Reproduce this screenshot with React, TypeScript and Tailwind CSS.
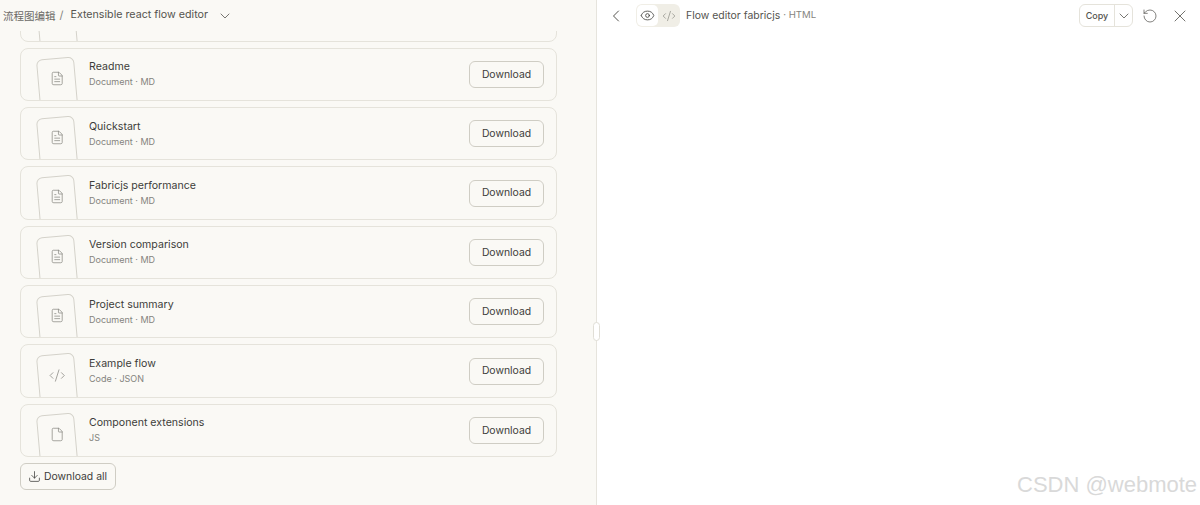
import React from 'react'
import { ChevronDown, ChevronLeft, CodeXml, Download, Eye, File, FileText, RotateCcw, X } from 'lucide-react'

const files = [
  { name: 'Readme', meta: 'Document · MD', icon: 'doc' },
  { name: 'Quickstart', meta: 'Document · MD', icon: 'doc' },
  { name: 'Fabricjs performance', meta: 'Document · MD', icon: 'doc' },
  { name: 'Version comparison', meta: 'Document · MD', icon: 'doc' },
  { name: 'Project summary', meta: 'Document · MD', icon: 'doc' },
  { name: 'Example flow', meta: 'Code · JSON', icon: 'code' },
  { name: 'Component extensions', meta: 'JS', icon: 'file' },
]

function Thumb({ icon }: { icon?: string }) {
  return (
    <div className="ml-[18px] mt-[9px] flex h-[72px] w-[38px] shrink-0 -rotate-[5deg] justify-center self-start rounded-[6px] border border-[#d4d2ca] bg-[#faf9f5] pt-[12px] text-[#8a8983]">
      <div className="h-[16px] rotate-[5deg]">
        {icon === 'doc' && <FileText size={15} strokeWidth={1.2} />}
        {icon === 'code' && <CodeXml size={17} strokeWidth={1.1} />}
        {icon === 'file' && <File size={15} strokeWidth={1.2} />}
      </div>
    </div>
  )
}

function FileCard({ name, meta, icon }: { name?: string; meta?: string; icon?: string }) {
  return (
    <div className="flex h-[53.33px] shrink-0 items-center overflow-hidden rounded-[8px] border border-[#e5e3db] bg-[#faf9f5]">
      <Thumb icon={icon} />
      {name && (
        <>
          <div className="ml-[12px] flex-1 pb-[1px]">
            <div className="text-[10.6px] leading-[16px] text-[#3d3d3a]">{name}</div>
            <div className="text-[9px] leading-[13px] text-[#85847e]">{meta}</div>
          </div>
          <button className="mr-[12px] h-[27px] w-[75px] rounded-[6px] border border-[#cfcdc4] text-[10.4px] text-[#3d3d3a]">
            Download
          </button>
        </>
      )}
    </div>
  )
}

export default function App() {
  return (
    <div className="relative flex h-[505px] w-[1200px] overflow-hidden bg-white font-['Inter',sans-serif]">
      <div className="flex h-full w-[597px] shrink-0 flex-col border-r border-[#e6e4dd] bg-[#faf9f5]">
        <div className="flex h-[31px] shrink-0 items-center pl-[3px] text-[11px] text-[#55544f]">
          <span className="font-['Noto_Sans_CJK_SC',sans-serif] text-[10.5px] text-[#6b6a65]">流程图编辑</span>
          <span className="ml-[4px] text-[#85847e]">/</span>
          <span className="ml-[7px] text-[10.7px] text-[#55544f]">Extensible react flow editor</span>
          <ChevronDown size={16} strokeWidth={1.2} className="ml-[9px] text-[#55544f]" />
        </div>
        <div className="flex min-h-0 flex-1 flex-col gap-[6px] overflow-hidden pl-[20px] pr-[39px]">
          <div className="-mt-[42.5px]">
            <FileCard />
          </div>
          {files.map((f) => (
            <FileCard key={f.name} name={f.name} meta={f.meta} icon={f.icon} />
          ))}
          <button className="flex h-[27px] w-[96px] shrink-0 items-center justify-center gap-[3px] rounded-[6px] border border-[#cfcdc4] pr-[1px] text-[10.4px] text-[#3d3d3a]">
            <Download size={13} strokeWidth={1.4} />
            Download all
          </button>
        </div>
      </div>

      <div className="flex h-[31px] flex-1 items-center pl-[9px] pr-[10px]">
        <ChevronLeft size={20} strokeWidth={1.2} className="text-[#55544f]" />
        <div className="ml-[10px] flex h-[23px] w-[44px] items-center rounded-[6px] bg-[#f0eee6] p-[1px]">
          <div className="flex h-[21px] w-[21px] items-center justify-center rounded-[5px] bg-white text-[#3d3d3a]">
            <Eye size={15} strokeWidth={1.3} />
          </div>
          <div className="flex h-[21px] flex-1 items-center justify-center text-[#8a8983]">
            <CodeXml size={14} strokeWidth={1.2} />
          </div>
        </div>
        <span className="ml-[6px] text-[10.45px] text-[#55544f]">Flow editor fabricjs</span>
        <span className="ml-[3px] text-[9.6px] text-[#85847e]">· HTML</span>
        <div className="ml-auto flex h-[23px] w-[54px] items-center rounded-[6px] border border-[#e5e3db]">
          <span className="w-[35px] border-r border-[#e5e3db] text-center text-[9px] font-medium leading-[21px] text-[#55544f]">
            Copy
          </span>
          <ChevronDown size={16} strokeWidth={1.2} className="ml-[1px] text-[#55544f]" />
        </div>
        <RotateCcw size={16} strokeWidth={1.1} className="ml-[9px] text-[#55544f]" />
        <X size={20} strokeWidth={1} className="ml-[12px] text-[#55544f]" />
      </div>

      <div className="absolute left-[593px] top-[322px] h-[19px] w-[7px] rounded-full border border-[#e0ded6] bg-white" />
      <div className="absolute left-[1017px] top-[471px] font-['Liberation_Sans',sans-serif] text-[22px] leading-[27px] text-[#d9d9d9]">
        CSDN @webmote
      </div>
    </div>
  )
}
